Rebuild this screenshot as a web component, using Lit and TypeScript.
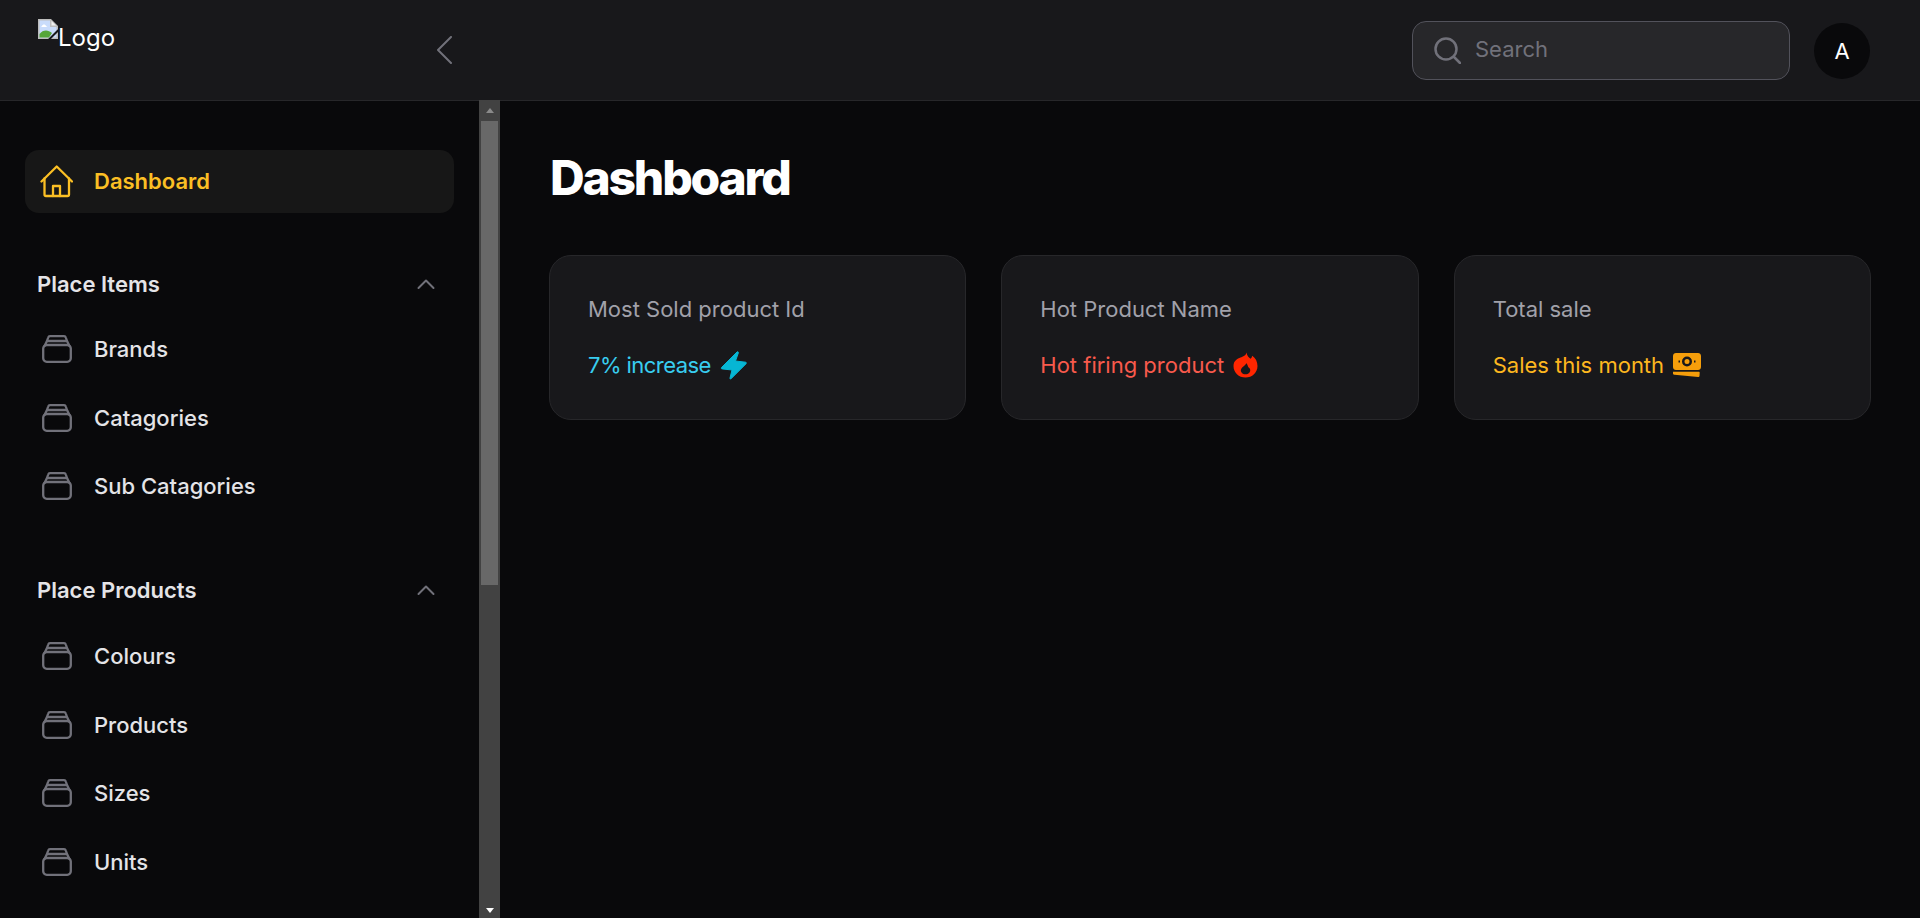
import { LitElement, html, css, svg } from 'lit';
import { customElement } from 'lit/decorators.js';

const boxIcon = html`<svg class="nav-icon" viewBox="0 0 30 28" fill="none" stroke="#71717a" stroke-width="2.300" stroke-linecap="round" stroke-linejoin="round">
  <rect x="1.200" y="10" width="27.600" height="16.800" rx="3.500"></rect>
  <path d="M2.500 11 L5 6 H25 L27.500 11"></path>
  <path d="M5 6 L6.200 2.500 C6.500 1.500 7 1.200 8 1.200 H22 C23 1.200 23.500 1.500 23.800 2.500 L25 6"></path>
</svg>`;

const chevronUp = html`<svg class="chevron" viewBox="0 0 18 12" fill="none" stroke="#71717a" stroke-width="2" stroke-linecap="round" stroke-linejoin="round"><path d="M1.500 10 L9 2.500 L16.500 10"></path></svg>`;

const boltIcon = svg`<path fill="#06b6d4" stroke="#06b6d4" stroke-width="1" stroke-linejoin="round" d="M17 1 L1.500 16.500 C1 17.300 1.300 17.800 2.200 17.900 L12 19 L10 27 C9.800 28 10.500 28.300 11.200 27.600 L26 12.800 C26.700 12 26.400 11.300 25.500 11.200 L15.500 10 L18.300 2 C18.600 1 17.800 0.400 17 1 Z"></path>`;

const flameIcon = svg`<path fill="#ff2600" fill-rule="evenodd" d="M13.500 0.500 C14 4 15.800 5.600 17.600 6.800 C18.500 6 19 5 19.200 3.800 C22.600 6 24.500 9.800 24.500 14 C24.500 20.700 19.200 25.500 12.500 25.500 C5.800 25.500 0.500 20.700 0.500 14 C0.500 8.800 4.500 6.500 7.500 5.500 C10 4.700 13 3.500 13.500 0.500 Z M13.200 11 C13.200 13 9 14.500 8 17.500 C7.200 20 9.500 22.300 12.500 22.300 C15.500 22.300 17.500 20.200 17.200 17.800 C16.900 15.700 15.200 15.800 15 14.500 C14.800 13.200 14.200 12 13.200 11 Z"></path>`;

const cashIcon = svg`<path fill="#f59e0b" fill-rule="evenodd" d="M3 0 H25 C26.700 0 28 1.300 28 3 V14 C28 15.700 26.700 17 25 17 H3 C1.300 17 0 15.700 0 14 V3 C0 1.300 1.300 0 3 0 Z M14 3.500 A5 5 0 1 0 14 13.500 A5 5 0 1 0 14 3.500 Z M14 6 A2.500 2.500 0 1 1 14 11 A2.500 2.500 0 1 1 14 6 Z M5.500 7.500 H7 V9.500 H5.500 Z M21 7.500 H22.500 V9.500 H21 Z"></path>
<path fill="#f59e0b" d="M0 18.800 H25.500 C26.500 18.800 26.800 19.300 26.700 20 L26.500 23 C26.400 23.700 26 24 25.200 23.900 L1.500 21.800 C0.500 21.700 0 21.200 0 20.500 Z"></path>`;

@customElement('app-root')
export class AppRoot extends LitElement {
  static styles = css`
    :host {
      display: block;
      height: 918px;
      overflow: hidden;
      font-family: Inter, 'Noto Sans', sans-serif;
      background: #09090b;
      color: #fff;
    }

    .header {
      height: 100px;
      box-sizing: border-box;
      background: #18181b;
      display: flex;
      align-items: center;
      padding: 1px 50px 0 0;
    }
    .logo-wrap {
      width: 432px;
      align-self: flex-start;
      margin-top: -1px;
      padding: 19px 0 0 38px;
      box-sizing: border-box;
      display: flex;
      font-size: 24px;
      line-height: 29px;
    }
    .logo-wrap span {
      margin-top: 4px;
    }
    .broken {
      width: 20px;
      height: 20px;
      flex: none;
    }
    .back {
      width: 28px;
      height: 28px;
      flex: none;
      margin-top: -1px;
    }
    .search {
      margin-left: auto;
      width: 378px;
      height: 59px;
      box-sizing: border-box;
      border: 1px solid #52525b;
      border-radius: 14px;
      background: #27272a;
      display: flex;
      align-items: center;
      padding-left: 21px;
      gap: 14px;
      color: #71717a;
      font-size: 22px;
    }
    .search svg {
      width: 27px;
      height: 27px;
      flex: none;
    }
    .search span {
      margin-bottom: 3px;
    }
    .avatar {
      margin-left: 24px;
      width: 56px;
      height: 56px;
      border-radius: 50%;
      background: #09090b;
      display: flex;
      align-items: center;
      justify-content: center;
      font-size: 22px;
      font-weight: 400;
    }

    .body {
      display: flex;
      height: 818px;
    }
    .sidebar {
      width: 500px;
      flex: none;
      display: flex;
      background: #09090b;
    }
    .nav {
      flex: 1;
      min-width: 0;
      overflow: hidden;
      border-top: 1px solid #27272a;
      padding: 49px 25px 0;
      box-sizing: border-box;
    }
    .nav-item {
      display: flex;
      align-items: center;
      gap: 22px;
      height: 68.6px;
      padding-left: 17px;
      font-size: 22px;
      font-weight: 500;
      color: #e4e4e7;
    }
    .nav-item.active {
      height: 63px;
      padding-left: 15px;
      gap: 21px;
      border-radius: 14px;
      background: #171717;
      color: #fbbf24;
      font-weight: 600;
    }
    .nav-item.active span {
      margin-bottom: 1px;
    }
    .nav-icon {
      width: 30px;
      height: 28px;
      flex: none;
    }
    .home {
      width: 33px;
      height: 33px;
      flex: none;
    }
    .group-head {
      display: flex;
      align-items: center;
      justify-content: space-between;
      height: 40px;
      padding: 0 19px 0 12px;
      font-size: 22px;
      font-weight: 600;
      color: #e4e4e7;
    }
    .group {
      margin-top: 51px;
    }
    .group.second {
      margin-top: 49px;
    }
    .group-list {
      margin-top: 11px;
    }
    .second .group-list {
      margin-top: 12px;
    }
    .chevron {
      width: 18px;
      height: 12px;
    }

    .scrollbar {
      width: 21px;
      flex: none;
      background: #424242;
      display: flex;
      flex-direction: column;
    }
    .sb-btn {
      height: 21px;
      flex: none;
      display: flex;
      align-items: center;
      justify-content: center;
    }
    .sb-btn.down {
      padding-top: 5px;
      box-sizing: border-box;
    }
    .arrow-up {
      width: 0;
      height: 0;
      border-left: 4.500px solid transparent;
      border-right: 4.500px solid transparent;
      border-bottom: 5px solid #8a8a8a;
    }
    .arrow-down {
      width: 0;
      height: 0;
      border-left: 4.500px solid transparent;
      border-right: 4.500px solid transparent;
      border-top: 5px solid #fff;
    }
    .sb-thumb {
      height: 464px;
      margin: 0 2px;
      background: #686868;
    }
    .sb-rest {
      flex: 1;
    }

    .main {
      flex: 1;
      min-width: 0;
      border-top: 1px solid #27272a;
      padding: 48px 49px 0 49px;
      background: #09090b;
    }
    h1 {
      margin: 0 0 0 1px;
      font-size: 48px;
      line-height: 58px;
      font-weight: 800;
      letter-spacing: -2.200px;
      color: #fff;
    }
    .cards {
      margin-top: 48px;
      display: grid;
      grid-template-columns: repeat(3, 1fr);
      gap: 35px;
    }
    .card {
      height: 165px;
      box-sizing: border-box;
      border: 1px solid #27272a;
      border-radius: 22px;
      background: #18181b;
      padding: 39px 38px 0;
    }
    .card-title {
      font-size: 22px;
      line-height: 28px;
      color: #a1a1aa;
    }
    .card-note {
      margin-top: 27px;
      display: flex;
      align-items: center;
      gap: 9px;
      height: 30px;
      font-size: 22px;
      line-height: 30px;
    }
    .card-note svg {
      flex: none;
    }
    .cyan { color: #38cdf0; letter-spacing: -0.550px; }
    .red { color: #f85a4c; }
    .amber { color: #fdb71f; }
  `;

  renderItem(label: string) {
    return html`<div class="nav-item">${boxIcon}<span>${label}</span></div>`;
  }

  render() {
    return html`
      <div class="header">
        <div class="logo-wrap">
          <svg class="broken" viewBox="0 0 20 20">
            <path fill="#bdbdbd" d="M0 0 H13 L20 7 V20 H0 Z"></path>
            <path fill="#c9dcfb" d="M1.500 1.500 H12 V8 H18.500 V18.500 H1.500 Z"></path>
            <path fill="#fff" d="M4 7 C4.500 5 7.500 5 8 7 L9.500 8 H3 Z"></path>
            <path fill="#55a639" d="M1.500 18.500 V15 C5 10.500 10 10.500 14 14 L11 18.500 Z"></path>
            <path fill="#f1f1f1" d="M13.500 2 L18 6.500 H13.500 Z"></path>
            <path fill="none" stroke="#18181b" stroke-width="2" d="M20.500 11 L11 20.500"></path>
          </svg>
          <span>Logo</span>
        </div>
        <svg class="back" viewBox="0 0 28 28" fill="none" stroke="#71717a" stroke-width="2" stroke-linecap="round" stroke-linejoin="round"><path d="M19 1 L6 14 L19 27"></path></svg>
        <div class="search">
          <svg viewBox="0 0 27 27" fill="none" stroke="#71717a" stroke-width="2.500" stroke-linecap="round"><circle cx="12" cy="12" r="10.500"></circle><path d="M20 20 L26 26"></path></svg>
          <span>Search</span>
        </div>
        <div class="avatar">A</div>
      </div>
      <div class="body">
        <div class="sidebar">
          <div class="nav">
            <div class="nav-item active">
              <svg class="home" viewBox="0 0 33 33" fill="none" stroke="#fbbf24" stroke-width="2.300" stroke-linecap="round" stroke-linejoin="round">
                <path d="M1.500 16.500 L16.700 1.500 L32 16.500"></path>
                <path d="M4.500 13.500 V29.500 C4.500 30.500 5 31 6 31 H27.500 C28.500 31 29 30.500 29 29.500 V13.500"></path>
                <path d="M13 31 V21 H20 V31"></path>
              </svg>
              <span>Dashboard</span>
            </div>
            <div class="group">
              <div class="group-head"><span>Place Items</span>${chevronUp}</div>
              <div class="group-list">
                ${['Brands', 'Catagories', 'Sub Catagories'].map((l) => this.renderItem(l))}
              </div>
            </div>
            <div class="group second">
              <div class="group-head"><span>Place Products</span>${chevronUp}</div>
              <div class="group-list">
                ${['Colours', 'Products', 'Sizes', 'Units'].map((l) => this.renderItem(l))}
              </div>
            </div>
          </div>
          <div class="scrollbar">
            <div class="sb-btn"><div class="arrow-up"></div></div>
            <div class="sb-thumb"></div>
            <div class="sb-rest"></div>
            <div class="sb-btn down"><div class="arrow-down"></div></div>
          </div>
        </div>
        <div class="main">
          <h1>Dashboard</h1>
          <div class="cards">
            <div class="card">
              <div class="card-title">Most Sold product Id</div>
              <div class="card-note cyan">7% increase
                <svg width="28" height="29" viewBox="0 0 28 29">${boltIcon}</svg>
              </div>
            </div>
            <div class="card">
              <div class="card-title">Hot Product Name</div>
              <div class="card-note red">Hot firing product
                <svg width="25" height="26" viewBox="0 0 25 26">${flameIcon}</svg>
              </div>
            </div>
            <div class="card">
              <div class="card-title">Total sale</div>
              <div class="card-note amber">Sales this month
                <svg width="28" height="24" viewBox="0 0 28 24">${cashIcon}</svg>
              </div>
            </div>
          </div>
        </div>
      </div>
    `;
  }
}
